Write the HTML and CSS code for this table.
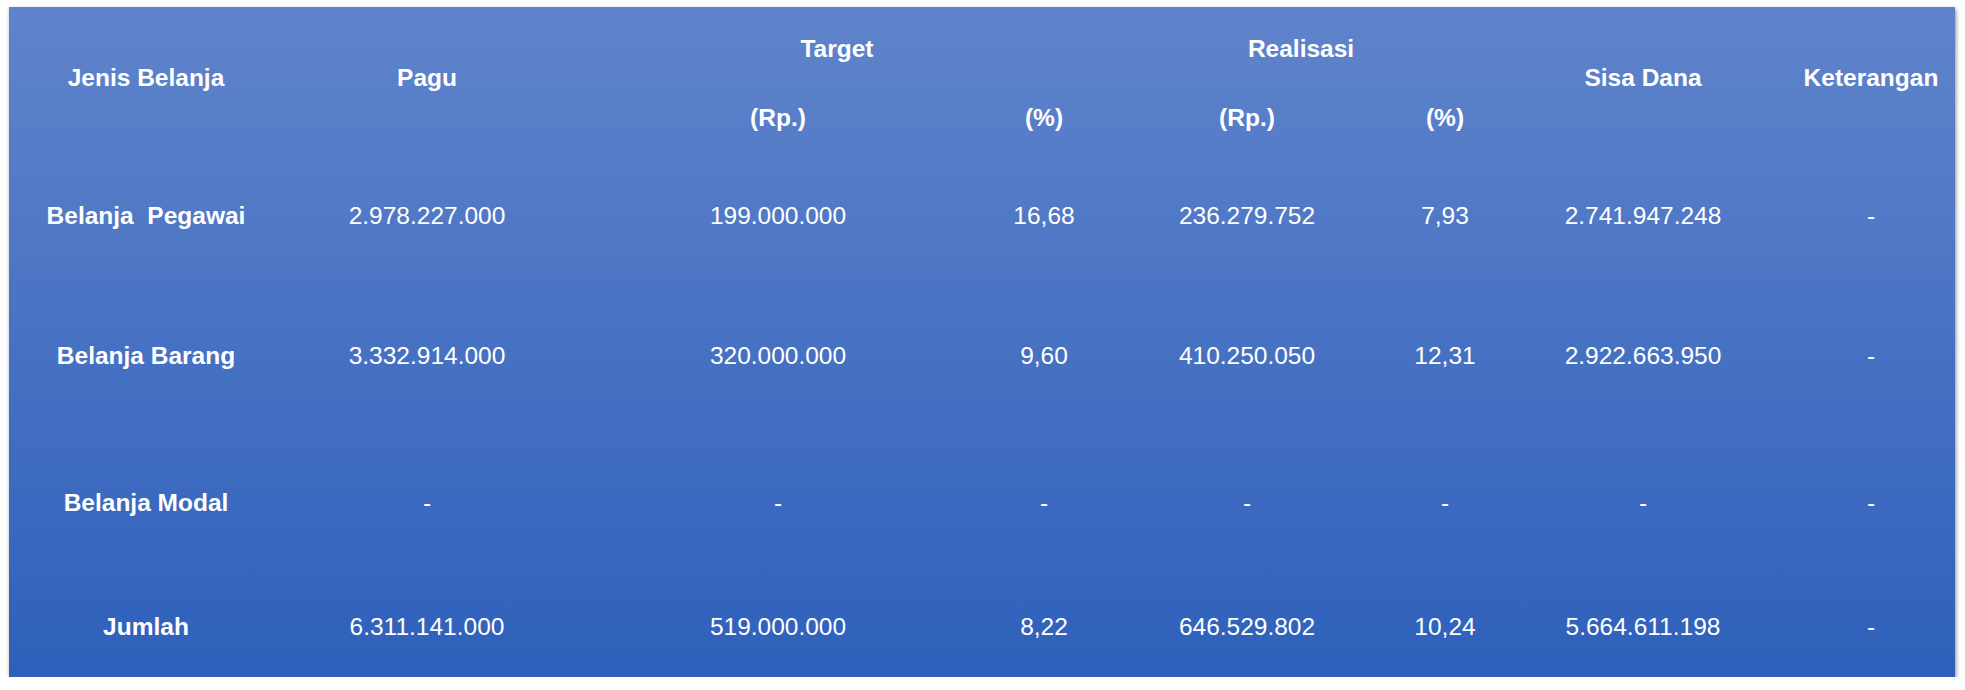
FILE: index.html
```html
<!DOCTYPE html>
<html lang="id">
<head>
    <meta charset="UTF-8">
    <title>Realisasi Anggaran</title>
    <link rel="stylesheet" href="styles.css">
</head>
<body>
    <div class="panel">
        <table class="tabel">
            <colgroup>
                <col class="c-jenis">
                <col class="c-pagu">
                <col class="c-rp">
                <col class="c-pct">
                <col class="c-rp2">
                <col class="c-pct2">
                <col class="c-sisa">
                <col class="c-ket">
            </colgroup>
            <thead>
                <tr class="head-a">
                    <th rowspan="2">Jenis Belanja</th>
                    <th rowspan="2">Pagu</th>
                    <th colspan="2">Target</th>
                    <th colspan="2">Realisasi</th>
                    <th rowspan="2">Sisa Dana</th>
                    <th rowspan="2">Keterangan</th>
                </tr>
                <tr class="head-b">
                    <th>(Rp.)</th>
                    <th>(%)</th>
                    <th>(Rp.)</th>
                    <th>(%)</th>
                </tr>
            </thead>
            <tbody>
                <tr class="row-1">
                    <th>Belanja&nbsp; Pegawai</th>
                    <td>2.978.227.000</td>
                    <td>199.000.000</td>
                    <td>16,68</td>
                    <td>236.279.752</td>
                    <td>7,93</td>
                    <td>2.741.947.248</td>
                    <td>-</td>
                </tr>
                <tr class="row-2">
                    <th>Belanja Barang</th>
                    <td>3.332.914.000</td>
                    <td>320.000.000</td>
                    <td>9,60</td>
                    <td>410.250.050</td>
                    <td>12,31</td>
                    <td>2.922.663.950</td>
                    <td>-</td>
                </tr>
                <tr class="row-3">
                    <th>Belanja Modal</th>
                    <td>-</td>
                    <td>-</td>
                    <td>-</td>
                    <td>-</td>
                    <td>-</td>
                    <td>-</td>
                    <td>-</td>
                </tr>
                <tr class="row-4">
                    <th>Jumlah</th>
                    <td>6.311.141.000</td>
                    <td>519.000.000</td>
                    <td>8,22</td>
                    <td>646.529.802</td>
                    <td>10,24</td>
                    <td>5.664.611.198</td>
                    <td>-</td>
                </tr>
            </tbody>
        </table>
    </div>
</body>
</html>
```

FILE: styles.css
```css
body { margin: 0; padding: 7px 10px 0 9px; background: #fff; font-family: "Liberation Sans", Arial, sans-serif; }
.panel { width: 1946px; height: 670px; background: linear-gradient(#6084cb, #2e60bb); box-shadow: 1px 2px 4px rgba(0,0,0,0.45); }
.tabel { width: 1946px; border-collapse: collapse; table-layout: fixed; color: #fff; font-size: 24.5px; }
.tabel th, .tabel td { padding: 0; text-align: center; vertical-align: middle; white-space: nowrap; }
.tabel th { font-weight: bold; }
.tabel td { font-weight: normal; }
.c-jenis { width: 274px; }
.c-pagu { width: 288px; }
.c-rp { width: 414px; }
.c-pct { width: 118px; }
.c-rp2 { width: 288px; }
.c-pct2 { width: 108px; }
.c-sisa { width: 288px; }
.c-ket { width: 168px; }
.head-a { height: 84px; }
.head-b { height: 58px; }
.head-b th { padding-bottom: 5px; }
.row-1 { height: 134px; }
.row-2 { height: 146px; }
.row-3 { height: 148px; }
.row-4 { height: 100px; }
```
